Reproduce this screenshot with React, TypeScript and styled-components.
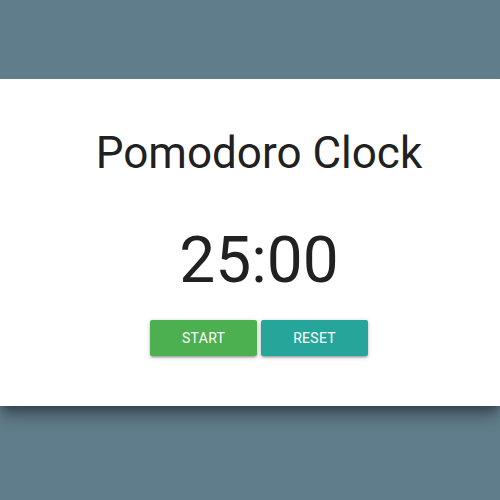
import React from "react";
import styled, { createGlobalStyle } from "styled-components";

const GlobalStyle = createGlobalStyle`
	html, body {
		margin: 0;
		padding: 0;
		background-color: #607d8b;
		font-family: Roboto, "Liberation Sans", sans-serif;
		color: rgba(0, 0, 0, 0.87);
	}
`;

const App: React.FC = () => {
	const [seconds] = React.useState(25 * 60);

	const mm = String(Math.floor(seconds / 60)).padStart(2, "0");
	const ss = String(seconds % 60).padStart(2, "0");

	return (
		<>
			<GlobalStyle />
			<Page>
				<Card>
					<Title>Pomodoro Clock</Title>
					<Timer>
						{mm}:{ss}
					</Timer>
					<ButtonHold>
						<Button color="#4caf50">Start</Button>
						<Button color="#26a69a">Reset</Button>
					</ButtonHold>
				</Card>
			</Page>
		</>
	);
};

export default App;

const Page = styled.div`
	padding-top: 79px;
	height: 500px;
	box-sizing: border-box;
`;

const Card = styled.div`
	background-color: #fff;
	height: 327px;
	box-sizing: border-box;
	padding-left: 18px;
	display: flex;
	flex-direction: column;
	align-items: center;
	box-shadow: 0 12px 15px -2px rgba(0, 0, 0, 0.3), 0 6px 8px -2px rgba(0, 0, 0, 0.25);
`;

const Title = styled.h1`
	margin: 46px 0 0;
	font-size: 44px;
	font-weight: 400;
	line-height: 56px;
	color: #212121;
`;

const Timer = styled.div`
	margin-top: 40px;
	font-size: 64px;
	font-weight: 400;
	line-height: 80px;
	color: #212121;
`;

const ButtonHold = styled.div`
	display: flex;
	gap: 4px;
	margin-top: 19px;
`;

const Button = styled.button<{ color: string }>`
	height: 36px;
	padding: 0 32px;
	border: none;
	border-radius: 2px;
	background-color: ${(p) => p.color};
	color: #fff;
	font-family: Roboto, "Liberation Sans", sans-serif;
	font-size: 14px;
	text-transform: uppercase;
	letter-spacing: 0.3px;
	cursor: pointer;
	box-shadow: 0 2px 2px 0 rgba(0, 0, 0, 0.14), 0 3px 1px -2px rgba(0, 0, 0, 0.12),
		0 1px 5px 0 rgba(0, 0, 0, 0.2);
`;
